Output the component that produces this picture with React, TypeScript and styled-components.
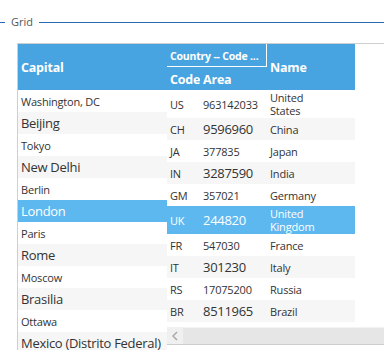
import styled, { createGlobalStyle } from 'styled-components';

const capitals = [
  'Washington, DC',
  'Beijing',
  'Tokyo',
  'New Delhi',
  'Berlin',
  'London',
  'Paris',
  'Rome',
  'Moscow',
  'Brasilia',
  'Ottawa',
  'Mexico (Distrito Federal)',
];

const countries = [
  { code: 'US', area: '963142033', name: 'United States' },
  { code: 'CH', area: '9596960', name: 'China' },
  { code: 'JA', area: '377835', name: 'Japan' },
  { code: 'IN', area: '3287590', name: 'India' },
  { code: 'GM', area: '357021', name: 'Germany' },
  { code: 'UK', area: '244820', name: 'United Kingdom' },
  { code: 'FR', area: '547030', name: 'France' },
  { code: 'IT', area: '301230', name: 'Italy' },
  { code: 'RS', area: '17075200', name: 'Russia' },
  { code: 'BR', area: '8511965', name: 'Brazil' },
];

const SELECTED = 5;

const GlobalStyle = createGlobalStyle`
  html, body {
    margin: 0;
    padding: 0;
    overflow: hidden;
    background: #fff;
    font-family: "Open Sans", "Noto Sans", sans-serif;
    color: #333;
  }
`;

export default function App() {
  return (
    <>
      <GlobalStyle />
      <Page>
        <GroupTitle>
          <Rule $short />
          <TitleText>Grid</TitleText>
          <Rule />
        </GroupTitle>

        <Grid>
          <FrozenPane>
            <HeaderCell $width={149} $height={46}>
              Capital
            </HeaderCell>
            {capitals.map((c, i) => (
              <Row key={c} $index={i} $selected={i === SELECTED}>
                <Cell $width={149} $big={i % 2 === 1}>
                  {c}
                </Cell>
              </Row>
            ))}
          </FrozenPane>

          <ScrollPane>
            <HeaderRow>
              <HeaderGroup>
                <GroupCaption>Country -- Code ...</GroupCaption>
                <SubHeaders>
                  <HeaderCell $width={33} $height={23}>
                    Code
                  </HeaderCell>
                  <HeaderCell $width={67} $height={23}>
                    Area
                  </HeaderCell>
                </SubHeaders>
              </HeaderGroup>
              <HeaderCell $width={88} $height={46}>
                Name
              </HeaderCell>
            </HeaderRow>

            <Body>
              {countries.map((c, i) => (
                <Row key={c.code} $index={i} $selected={i === SELECTED}>
                  <Cell $width={33}>{c.code}</Cell>
                  <Cell $width={67} $big={i % 2 === 1}>
                    {c.area}
                  </Cell>
                  <Cell $width={88}>
                    <Wrap>{c.name}</Wrap>
                  </Cell>
                </Row>
              ))}
            </Body>

            <ScrollBar>
              <ArrowButton>
                <svg width="6" height="10" viewBox="0 0 6 10">
                  <path d="M5 1 L1 5 L5 9" fill="none" stroke="#a6a6a6" strokeWidth="1.4" />
                </svg>
              </ArrowButton>
              <Thumb />
            </ScrollBar>
          </ScrollPane>
        </Grid>
      </Page>
    </>
  );
}

const Page = styled.div({
  width: '384px',
  height: '350px',
  overflow: 'hidden',
  paddingTop: '15px',
  boxSizing: 'border-box',
});

const GroupTitle = styled.div({
  display: 'flex',
  alignItems: 'center',
  gap: '6px',
  height: '14px',
});

const Rule = styled.div<{ $short?: boolean }>(({ $short }) => ({
  height: '1px',
  background: '#2a6ab5',
  width: $short ? '5px' : 'auto',
  flex: $short ? 'none' : 1,
}));

const TitleText = styled.span({
  fontSize: '11px',
  color: '#555',
  lineHeight: '14px',
});

const Grid = styled.div({
  display: 'flex',
  marginTop: '14px',
  marginLeft: '17px',
  width: '420px',
  borderTop: '1px solid #cfcfcf',
  borderLeft: '1px solid #cfcfcf',
});

const FrozenPane = styled.div({
  display: 'flex',
  flexDirection: 'column',
  width: '149px',
  flex: 'none',
});

const ScrollPane = styled.div({
  display: 'flex',
  flexDirection: 'column',
  flex: 1,
});

const HeaderRow = styled.div({
  display: 'flex',
});

const HeaderGroup = styled.div({
  display: 'flex',
  flexDirection: 'column',
  width: '100px',
});

const GroupCaption = styled.div({
  height: '23px',
  boxSizing: 'border-box',
  borderRight: '1px solid #fff',
  borderBottom: '1px solid #fff',
  background: '#48a4e0',
  color: '#fff',
  fontWeight: 700,
  fontSize: '10.5px',
  letterSpacing: '-0.2px',
  display: 'flex',
  alignItems: 'center',
  padding: '1px 3px 0',
  whiteSpace: 'nowrap',
  overflow: 'hidden',
});

const SubHeaders = styled.div({
  display: 'flex',
});

const HeaderCell = styled.div<{ $width: number; $height: number }>(({ $width, $height }) => ({
  width: `${$width}px`,
  height: `${$height}px`,
  boxSizing: 'border-box',
  background: '#48a4e0',
  color: '#fff',
  fontWeight: 700,
  fontSize: '12.5px',
  letterSpacing: '-0.2px',
  display: 'flex',
  alignItems: 'center',
  paddingLeft: '3px',
  paddingTop: '1px',
  whiteSpace: 'nowrap',
}));

const Body = styled.div({
  height: '237px',
  overflow: 'hidden',
  background: '#fff',
});

const Row = styled.div<{ $index: number; $selected: boolean }>(({ $index, $selected }) => ({
  display: 'flex',
  background: $selected ? '#5db8ef' : $index % 2 === 1 ? '#f6f6f6' : '#fff',
  color: $selected ? '#fff' : '#333',
  width: 'fit-content',
}));

const Cell = styled.div<{ $width: number; $big?: boolean }>(({ $width, $big }) => ({
  width: `${$width}px`,
  minHeight: '22px',
  boxSizing: 'border-box',
  padding: '1px 3px',
  display: 'flex',
  alignItems: 'center',
  fontSize: $big ? '13px' : '11px',
  letterSpacing: $big ? '-0.3px' : '-0.2px',
  lineHeight: '13px',
  whiteSpace: 'nowrap',
  overflow: 'hidden',
}));

const Wrap = styled.span({
  whiteSpace: 'normal',
  maxWidth: '52px',
});

const ScrollBar = styled.div({
  display: 'flex',
  height: '17px',
  background: '#f0f0f0',
  borderBottom: '1px solid #cdcdcd',
});

const ArrowButton = styled.div({
  width: '16px',
  display: 'flex',
  alignItems: 'center',
  justifyContent: 'center',
});

const Thumb = styled.div({
  flex: 1,
  background: '#e6e6e6',
  borderTop: '1px solid #f3f3f3',
});
